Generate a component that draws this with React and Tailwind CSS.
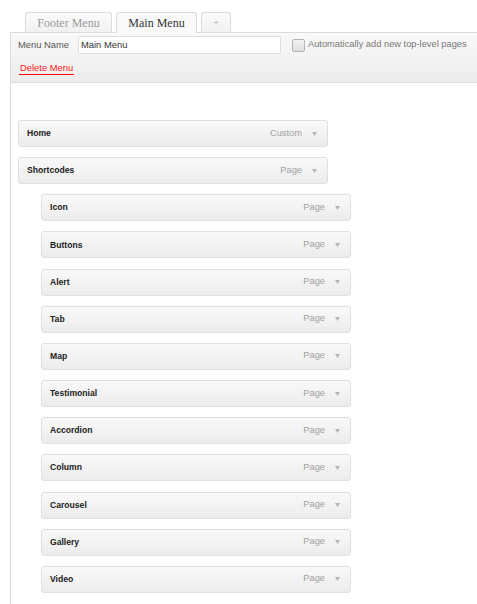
import React from "react";

const Arrow = () => (
  <svg width="5" height="4" viewBox="0 0 5 4" className="ml-[10px]">
    <path d="M0 0 H5 L2.5 4 Z" fill="#b5b5b5" />
  </svg>
);

const Item = ({ title, type, sub }) => (
  <div
    className={`flex h-[27px] w-[310px] items-center justify-between rounded-[3px] border border-[#dfdfdf] bg-gradient-to-b from-[#f9f9f9] to-[#ececec] pl-[8px] pr-[10px] ${sub ? "ml-[23px]" : ""}`}
  >
    <span className="text-[8.6px] font-bold text-[#222]">{title}</span>
    <span className="flex items-center">
      <span className="text-[9.3px] text-[#a0a0a0]">{type}</span>
      <Arrow />
    </span>
  </div>
);

const subs = [
  "Icon",
  "Buttons",
  "Alert",
  "Tab",
  "Map",
  "Testimonial",
  "Accordion",
  "Column",
  "Carousel",
  "Gallery",
  "Video",
];

export default function App() {
  return (
    <div
      className="h-[604px] w-[477px] overflow-hidden bg-white"
      style={{ fontFamily: '"Liberation Sans", Arial, sans-serif' }}
    >
      <div
        className="flex items-end gap-[4px] pl-[25px] pt-[12px]"
        style={{ fontFamily: '"Liberation Serif", "Times New Roman", serif' }}
      >
        <div className="flex h-[20px] w-[87px] items-center justify-center rounded-t-[3px] border border-b-0 border-[#dcdcdc] bg-gradient-to-b from-[#fbfbfb] to-[#f1f1f1] text-[12px] text-[#9a9a9a]">
          Footer Menu
        </div>
        <div className="relative z-10 -mb-[1px] flex h-[21px] w-[81px] items-center justify-center rounded-t-[3px] border border-b-0 border-[#dcdcdc] bg-[#f9f9f9] text-[12px] text-[#333]">
          Main Menu
        </div>
        <div className="flex h-[20px] w-[30px] items-center justify-center rounded-t-[3px] border border-b-0 border-[#dcdcdc] bg-gradient-to-b from-[#fbfbfb] to-[#f1f1f1] text-[11px] text-[#aaa]">
          +
        </div>
      </div>
      <div className="ml-[10px] h-[600px] border-l border-[#dcdcdc]">
        <div className="h-[51px] border-b border-t border-[#dcdcdc] bg-gradient-to-b from-[#f9f9f9] to-[#ececec] pl-[7px] pt-[3px]">
          <div className="flex items-center">
            <span className="w-[60px] text-[9.4px] text-[#555]">Menu Name</span>
            <div className="flex h-[18px] w-[203px] items-center rounded-[2px] border border-[#dddddd] bg-white pl-[2px] text-[9.4px] text-[#333]">
              Main Menu
            </div>
            <div className="ml-[11px] h-[13px] w-[13px] rounded-[2px] border border-[#b4b4b4] bg-gradient-to-b from-[#f2f2f2] to-[#dedede]" />
            <span className="ml-[3px] text-[9.3px] text-[#777]">
              Automatically add new top-level pages
            </span>
          </div>
          <div className="mt-[8px] flex pl-[1px]">
            <span className="border-b border-[#ff0000] px-[1px] pb-[1px] text-[9.4px] leading-[11px] text-[#ff1a1a]">
              Delete Menu
            </span>
          </div>
        </div>
        <div className="flex flex-col gap-[10.17px] pl-[7px] pt-[37px]">
          <Item title="Home" type="Custom" />
          <Item title="Shortcodes" type="Page" />
          {subs.map((s) => (
            <Item key={s} title={s} type="Page" sub />
          ))}
        </div>
      </div>
    </div>
  );
}
